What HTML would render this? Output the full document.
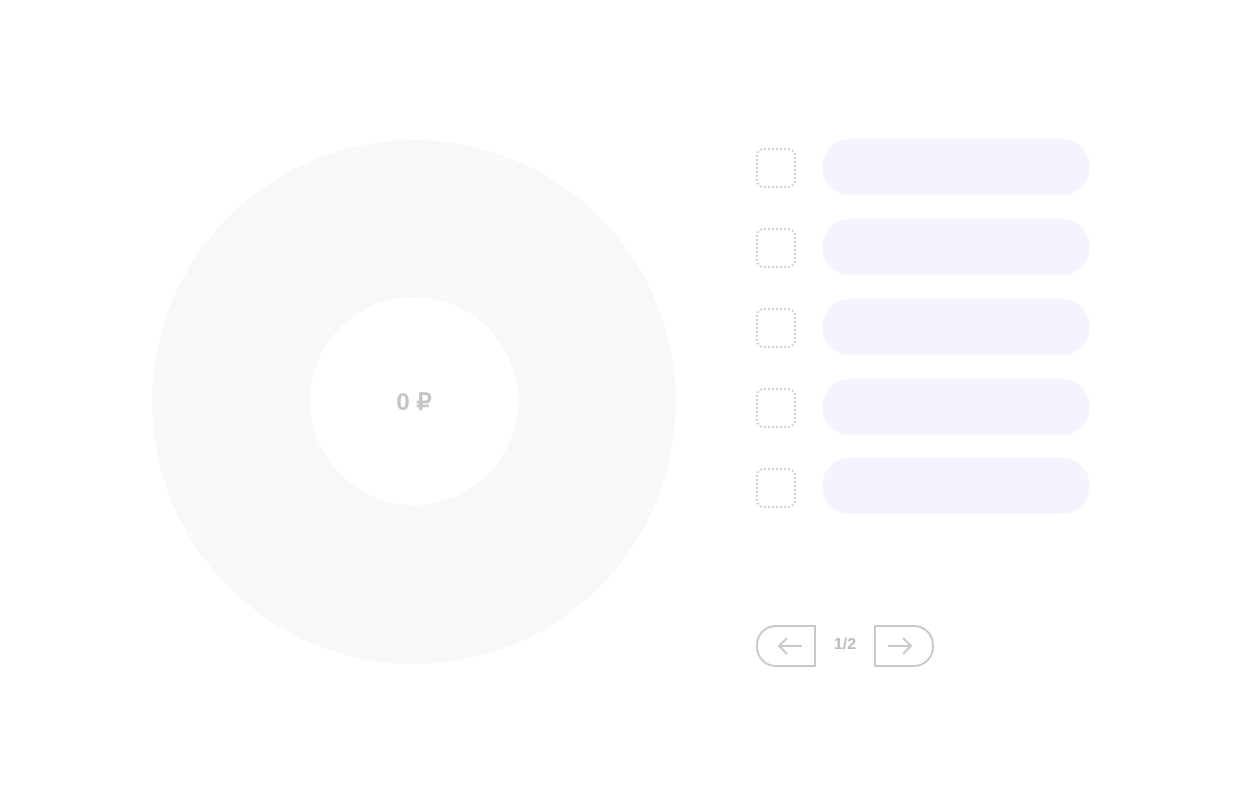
<!DOCTYPE html>
<html><head><meta charset="utf-8"><style>
html,body{margin:0;padding:0;background:#fff;width:1240px;height:805px;overflow:hidden;position:relative;font-family:"Liberation Sans",sans-serif}
.ring{position:absolute;left:152px;top:140px;width:524px;height:524px;border-radius:50%;background:#f8f8f8}
.hole{position:absolute;left:310px;top:297px;width:208px;height:208px;border-radius:50%;background:#fff}
.sum{position:absolute;left:364px;top:388px;width:100px;text-align:center;font-size:24px;font-weight:bold;color:#c4c4c4;line-height:30px}
.sq{position:absolute;left:756px;width:36px;height:36px;border:2px dotted #d0d0d0;border-radius:8px}
.pill{position:absolute;left:822px;width:268px;height:56px;border-radius:28px;background:#f5f3fe}
.btn{position:absolute;top:625px;width:56px;height:38px;border:2px solid #c8c8c8}
.btn.l{left:756px;border-radius:20px 0 0 20px}
.btn.r{left:874px;border-radius:0 20px 20px 0}
.btn svg{position:absolute;top:9px}
.pg{position:absolute;left:826px;top:636px;width:38px;text-align:center;font-size:16px;font-weight:bold;color:#bdbdbd}
</style></head><body>
<div class="ring"></div><div class="hole"></div>
<div class="sum">0 ₽</div>
<div class="sq" style="top:148px"></div><div class="pill" style="top:139px"></div>
<div class="sq" style="top:228px"></div><div class="pill" style="top:219px"></div>
<div class="sq" style="top:308px"></div><div class="pill" style="top:299px"></div>
<div class="sq" style="top:388px"></div><div class="pill" style="top:379px"></div>
<div class="sq" style="top:468px"></div><div class="pill" style="top:458px"></div>
<div class="btn l"><svg style="left:19px" width="26" height="20" viewBox="0 0 26 20"><path d="M25 10H2M10 2L2 10L10 18" fill="none" stroke="#c8c8c8" stroke-width="2"/></svg></div>
<div class="pg">1/2</div>
<div class="btn r"><svg style="left:11px" width="26" height="20" viewBox="0 0 26 20"><path d="M1 10H24M16 2L24 10L16 18" fill="none" stroke="#c8c8c8" stroke-width="2"/></svg></div>
</body></html>
